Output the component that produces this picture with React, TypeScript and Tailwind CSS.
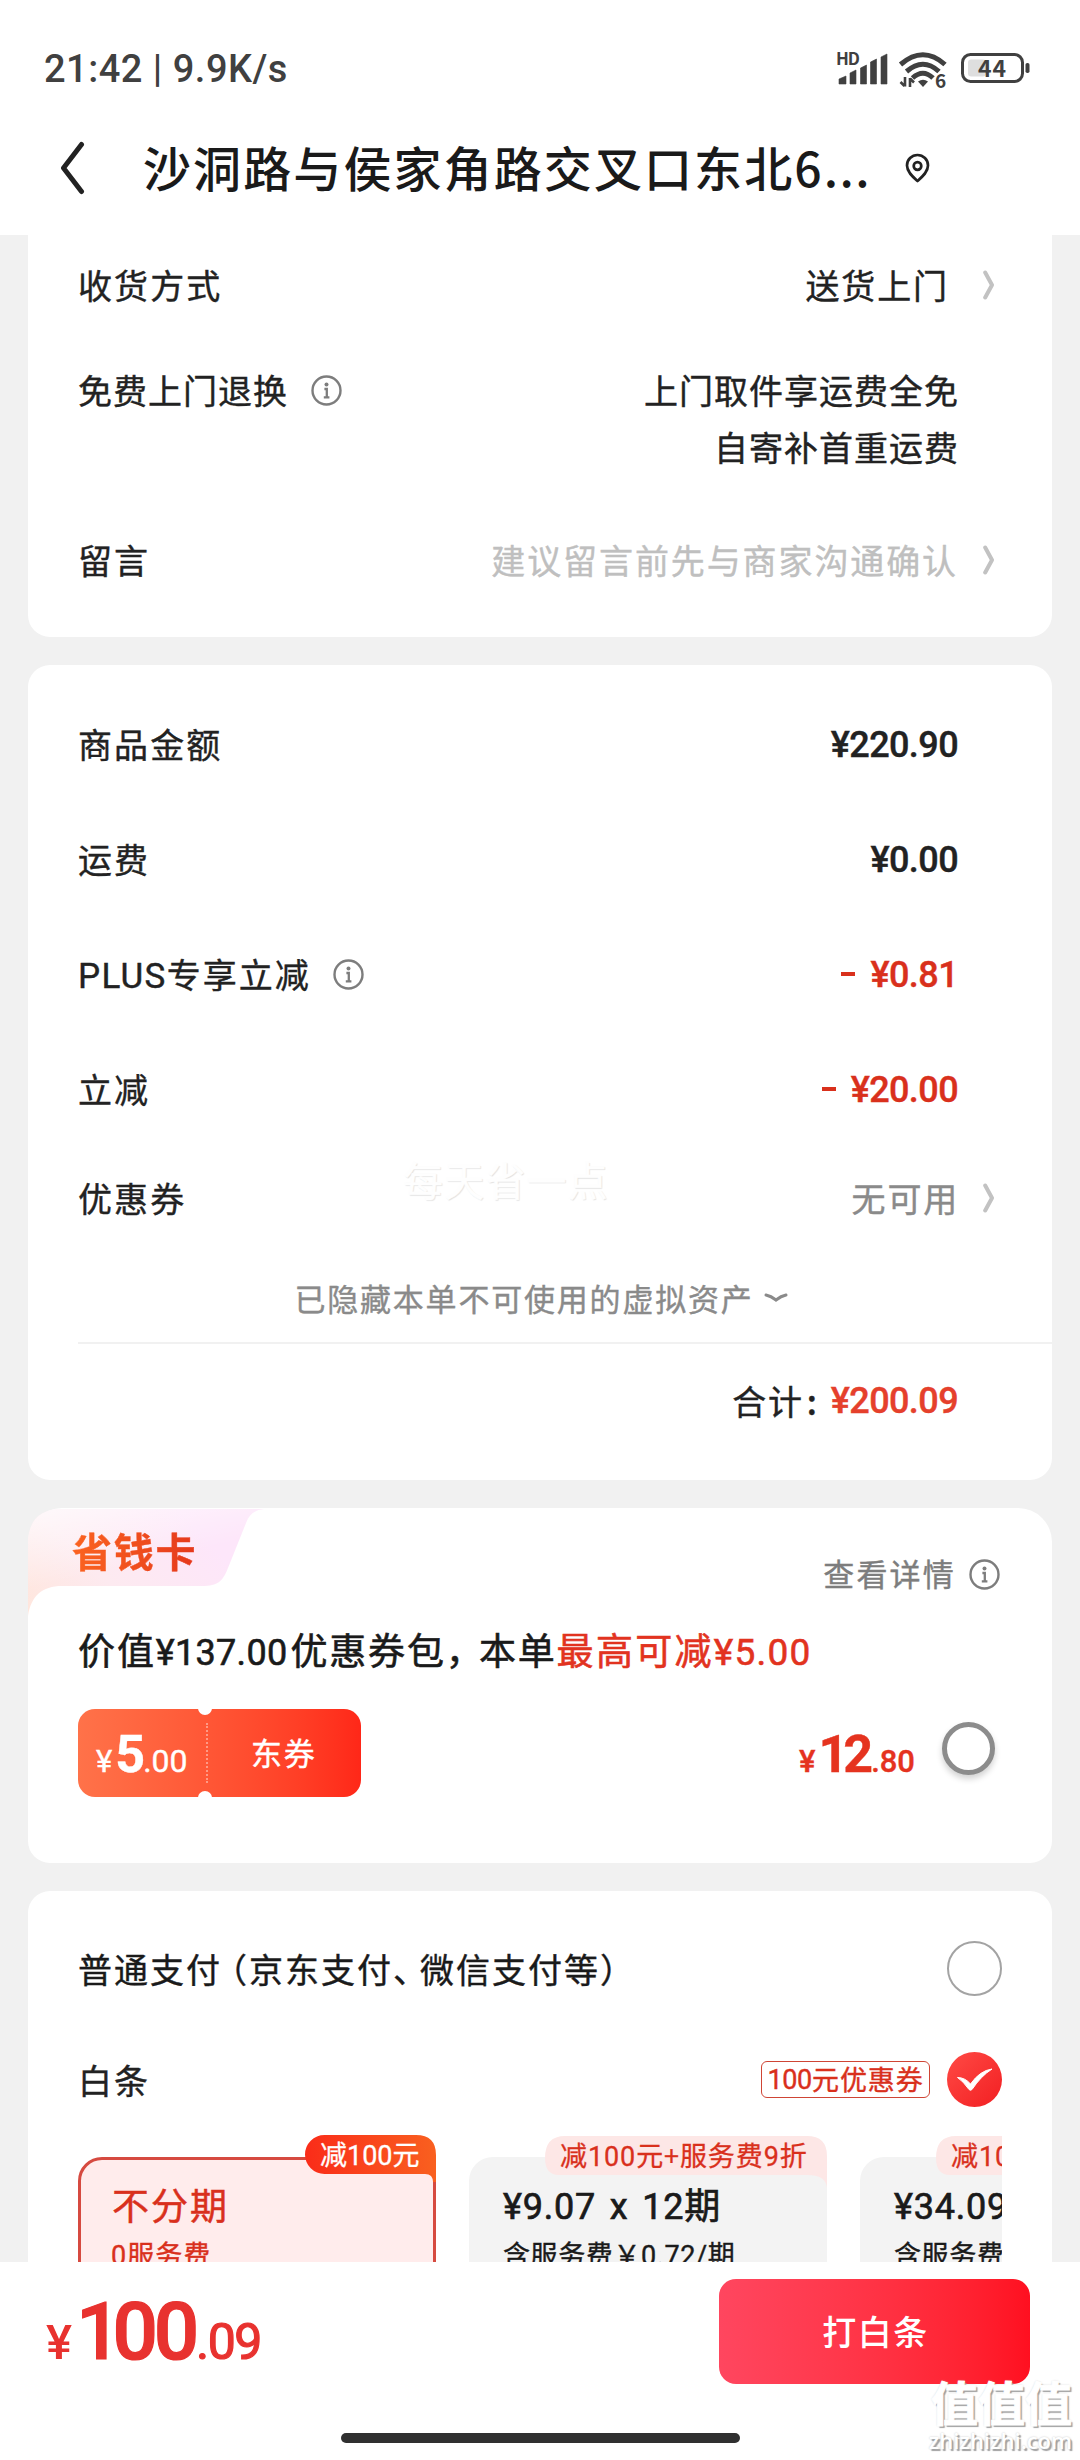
import type { ReactNode } from "react";

function InfoIcon({ className = "" }: { className?: string }) {
  return (
    <svg className={"h-[31px] w-[31px] shrink-0 " + className} viewBox="0 0 31 31" fill="none" stroke="#7d7d7d">
      <circle cx="15.5" cy="15.5" r="14" strokeWidth="2.4" />
      <circle cx="15.5" cy="9.6" r="2" fill="#7d7d7d" stroke="none" />
      <path d="M13.400 14h2.400v8.300M12.8 22.400h5.600" strokeWidth="2.300" />
    </svg>
  );
}

function ChevronRight() {
  return (
    <svg className="ml-[25px] mt-[2px] h-[30px] w-[11px] shrink-0" viewBox="0 0 11 30" fill="none">
      <path d="M2.2 2.5L9 15L2.2 27.5" stroke="#c2c2c2" strokeWidth="4" strokeLinecap="round" strokeLinejoin="round" />
    </svg>
  );
}

function Latin({ children, className = "" }: { children: ReactNode; className?: string }) {
  return <span className={"font-['Roboto','Noto_Sans_CJK_SC',sans-serif] leading-none " + className}>{children}</span>;
}

function StatusBar() {
  return (
    <div className="flex h-[134px] items-center justify-between pl-[44px] pr-[50px]">
      <div className="mt-[5px] font-['Roboto',sans-serif] text-[38px] font-medium tracking-[0.5px] text-[#404040]">21:42 | 9.9K/s</div>
      <svg className="mt-[3px] h-[40px] w-[194px] overflow-visible" viewBox="0 0 194 40" fill="#404040">
        <text x="0" y="15.500" fontSize="17" fontWeight="700" textLength="24">HD</text>
        <path d="M3 35V30l7-3v8zM14 35V24l6-3v14zM24.5 35V19l6-3v19zM34.500 35V13l6-3v25zM45 35V8l6-3v30z" stroke="#404040" strokeWidth="0.6" strokeLinejoin="round" />
        <g fill="none" stroke="#404040" strokeWidth="5">
          <path d="M64.500 15.500Q87 -4 109 15.500" />
          <path d="M70.500 22.500Q87 8 103 22.500" />
          <path d="M76.500 29Q87 19.500 97 29" />
        </g>
        <path d="M82 32.500q5-3.500 10 0L87 38z" />
        <path d="M69 28v9.500M64.500 33l4 4M74 38v-9M74 29.500l4 4" stroke="#404040" strokeWidth="2.6" fill="none" />
        <text x="99" y="38.500" fontSize="19" fontWeight="700">6</text>
        <rect x="126.500" y="5.500" width="60" height="27" rx="8" fill="none" stroke="#404040" strokeWidth="3" />
        <rect x="132" y="10.500" width="18" height="17" rx="3" fill="#dedede" />
        <rect x="189.500" y="14" width="4" height="10" rx="1.800" />
        <text x="142" y="27.500" fontSize="23" fontWeight="700" textLength="28">44</text>
      </svg>
    </div>
  );
}

function Header() {
  return (
    <header className="h-[235px] bg-white">
      <StatusBar />
      <div className="flex h-[64px] items-center pl-[59px]">
        <svg className="mt-[3px] h-[54px] w-[26px] shrink-0" viewBox="0 0 26 54" fill="none">
          <path d="M22.500 3.500L4.500 27L22.500 50.500" stroke="#222" strokeWidth="5" strokeLinecap="round" strokeLinejoin="round" />
        </svg>
        <h1 className="ml-[58px] w-[728px] whitespace-nowrap text-[48px] font-medium leading-[64px] tracking-[2.1px] text-[#1a1a1a]">
          沙洞路与侯家角路交叉口东北6<span className="tracking-[1.500px]">...</span>
        </h1>
        <svg className="ml-[34px] mt-[4px] h-[30px] w-[25px] shrink-0" viewBox="0 0 25 30" fill="none" stroke="#222" strokeWidth="2.700">
          <path d="M12.500 28C8 24 2 19 2 12.500a10.500 10.500 0 0 1 21 0C23 19 17 24 12.500 28z" strokeLinejoin="round" />
          <circle cx="12.500" cy="13" r="3.800" />
        </svg>
      </div>
    </header>
  );
}

type RowProps = { label: ReactNode; value: ReactNode; className: string; info?: boolean; arrow?: boolean; labelClass?: string };

function Row({ label, value, className, info, arrow, labelClass = "tracking-[2.1px]" }: RowProps) {
  return (
    <div className={"flex items-center whitespace-nowrap pl-[50px] text-[34px] text-[#222] " + className + (arrow ? " pr-[58px]" : " pr-[94px]")}>
      <span className={labelClass}>{label}</span>
      {info && <InfoIcon className="ml-[22px] mt-[2px]" />}
      <span className="ml-auto">{value}</span>
      {arrow && <ChevronRight />}
    </div>
  );
}

function DeliveryCard() {
  return (
    <section className="h-[402px] rounded-b-[22px] bg-white">
      <Row label="收货方式" arrow className="h-[98px]" value={<span className="mr-[9px] tracking-[1.9px]">送货上门</span>} />
      <div className="mt-[28px] flex items-start pl-[50px] pr-[93px] text-[34px] leading-[57px] tracking-[1px] text-[#222]">
        <span>免费上门退换</span>
        <InfoIcon className="ml-[23px] mt-[14px]" />
        <p className="ml-auto text-right">
          上门取件享运费全免
          <br />
          自寄补首重运费
        </p>
      </div>
      <Row
        label="留言"
        arrow
        className="mt-[56px] h-[56px]"
        value={<span className="tracking-[1.9px] text-[#bfbfbf]">建议留言前先与商家沟通确认</span>}
      />
    </section>
  );
}

function Price({ children, className = "text-[#222]" }: { children: ReactNode; className?: string }) {
  return <Latin className={"block pt-[2px] text-[36px] font-medium tracking-[-0.6px] " + className}>{children}</Latin>;
}

function Minus() {
  return <span className="mb-[11px] mr-[15px] inline-block h-[3.500px] w-[14px] bg-[#d9301c]" />;
}

function AmountCard() {
  return (
    <section className="relative mt-[28px] h-[815px] rounded-[22px] bg-white pt-[21px]">
      <Row label="商品金额" className="h-[115px]" value={<Price>¥220.90</Price>} />
      <Row label="运费" className="h-[115px]" value={<Price>¥0.00</Price>} />
      <Row
        label={<><Latin className="text-[35px] tracking-[1.300px]">PLUS</Latin>专享立减</>}
        info
        labelClass="tracking-[2px]"
        className="h-[115px]"
        value={<Price className="text-[#d9301c]"><Minus />¥0.81</Price>}
      />
      <Row label="立减" className="h-[115px]" value={<Price className="text-[#d9301c]"><Minus />¥20.00</Price>} />
      <Row
        label="优惠券"
        arrow
        className="h-[102px]"
        value={<span className="-mr-[1px] tracking-[1.8px] text-[#8a8a8a]">无可用</span>}
      />
      <div className="mt-[26px] flex h-[48px] items-center justify-center pl-[2px] text-[31px] tracking-[1.800px] text-[#8a8a8a]">
        已隐藏本单不可使用的虚拟资产
        <svg className="ml-[10px] h-[10px] w-[24px]" viewBox="0 0 24 10" fill="none">
          <path d="M2 2Q7 3 12 7Q17 3 22 2" stroke="#8a8a8a" strokeWidth="3" strokeLinecap="round" />
        </svg>
      </div>
      <div className="ml-[50px] mt-[20px] h-[2px] bg-[#f1f1f1]" />
      <div className="flex h-[112px] items-center justify-end pr-[94px]">
        <span className="mr-[12px] whitespace-nowrap text-[34px] tracking-[1.8px] text-[#222]">
          合计<span className="ml-[3px] font-medium">:</span>
        </span>
        <Price className="text-[#e5402c]">¥200.09</Price>
      </div>
      <div className="absolute left-[375px] top-[484px] whitespace-nowrap text-[40px] leading-[60px] tracking-[1.2px] text-[#fefefe] [text-shadow:1px_1px_1px_#e2e2e2]">
        每天省一点
      </div>
    </section>
  );
}

function SavingsCard() {
  return (
    <section className="relative mt-[28px] h-[355px] rounded-b-[22px] rounded-t-[34px] bg-white">
      <svg className="absolute left-0 top-0 h-[110px] w-[240px]" viewBox="0 0 240 110">
        <defs>
          <linearGradient id="tab" x1="0" y1="1" x2="0.9" y2="0.6">
            <stop offset="0" stopColor="#ffe6dc" />
            <stop offset="0.450" stopColor="#fdeaf0" />
            <stop offset="1" stopColor="#fde6fa" />
          </linearGradient>
          <linearGradient id="tabFade" x1="0" y1="0" x2="0.300" y2="0.600">
            <stop offset="0" stopColor="#fff" stopOpacity="0.7" />
            <stop offset="1" stopColor="#fff" stopOpacity="0" />
          </linearGradient>
        </defs>
        <path d="M0 36Q0 1 34 1H236C226 2 221 7 218 15L200 60C195 73 190 78 174 78H34C14 78 3 88 0 108Z" fill="url(#tab)" />
        <path d="M0 36Q0 1 34 1H236C226 2 221 7 218 15L200 60C195 73 190 78 174 78H34C14 78 3 88 0 108Z" fill="url(#tabFade)" />
      </svg>
      <div className="relative flex items-start justify-between pl-[44px] pr-[52px]">
        <h2 className="mt-[12px] bg-linear-to-r from-[#fb6320] to-[#e5371c] bg-clip-text text-[40px] font-bold leading-[60px] tracking-[1.7px] text-transparent">
          省钱卡
        </h2>
        <div className="mt-[42px] flex h-[46px] items-center text-[31px] tracking-[2.2px] text-[#7d7d7d]">
          查看详情
          <InfoIcon className="ml-[13px] mt-[3px]" />
        </div>
      </div>
      <p className="mt-[23px] h-[60px] whitespace-nowrap pl-[50px] text-[37px] leading-[60px] text-[#1a1a1a] [-webkit-text-stroke:0.600px_currentColor]">
        <span className="tracking-[1.9px]">价值</span>
        <Latin className="text-[36px] tracking-[0.3px]">¥137.00</Latin>
        <span className="ml-[3px] tracking-[1.8px]">优惠券包<span className="mr-[13px] [font-feature-settings:'halt']">，</span>本单</span>
        <span className="tracking-[2.3px] text-[#e2331f]">最高可减</span>
        <Latin className="text-[37px] tracking-[1.200px] text-[#e2331f]">¥5.00</Latin>
      </p>
      <div className="mt-[30px] flex items-start justify-between pl-[50px] pr-[57px]">
        <div className="relative flex h-[88px] w-[283px] overflow-hidden rounded-[17px] bg-linear-to-r from-[#ff7249] to-[#ff2718] text-white">
          <div className="flex h-[88px] w-[128px] items-baseline pl-[18px] pt-[8px] font-['Roboto',sans-serif] leading-[76px]">
            <span className="text-[31px]">¥</span>
            <span className="ml-[3px] text-[52px] font-bold tracking-[-3px]">5</span>
            <span className="ml-px text-[32px]">.00</span>
          </div>
          <div className="my-[14px] border-l-2 border-dotted border-white/40" />
          <div className="flex-1 pl-[43px] text-[31px] leading-[86px] tracking-[1.7px] [-webkit-text-stroke:0.400px_currentColor]">东券</div>
          <i className="absolute left-[120px] top-[-8px] h-[14px] w-[14px] rounded-full bg-white" />
          <i className="absolute bottom-[-8px] left-[120px] h-[14px] w-[14px] rounded-full bg-white" />
        </div>
        <div className="flex items-start">
          <div className="flex items-baseline pt-[8px] font-['Roboto',sans-serif] leading-[76px] text-[#e5331f]">
            <span className="text-[31px] font-medium">¥</span>
            <span className="ml-[3px] text-[52px] font-bold tracking-[-5px]">12</span>
            <span className="ml-[3px] text-[31px] font-medium">.80</span>
          </div>
          <div className="ml-[27px] mt-[13px] h-[53px] w-[53px] rounded-full border-[5px] border-[#8c8c8c] bg-white shadow-[0_4px_6px_rgba(0,0,0,0.18)]" />
        </div>
      </div>
    </section>
  );
}

function PinkBadge({ children }: { children: ReactNode }) {
  return (
    <div className="absolute left-[76px] top-[-21px] h-[52px] w-[282px]">
      <svg className="absolute inset-0 h-[52px] w-[282px]" viewBox="0 0 282 52" fill="#fde7e6">
        <path d="M20 0H262Q282 0 282 20V52Q281 39 262 39H14Q0 39 0 22Q0 0 20 0Z" />
      </svg>
      <div className="relative h-[38px] whitespace-nowrap pl-[15px] text-[27px] leading-[38px] tracking-[0.9px] text-[#d9301c] [-webkit-text-stroke:0.300px_currentColor]">
        {children}
      </div>
    </div>
  );
}

const discountLabel = (
  <>
    减<Latin>100</Latin>元+服务费<Latin>9</Latin>折
  </>
);

function InstallmentOption({ title, fee }: { title: ReactNode; fee: ReactNode }) {
  return (
    <div className="relative h-[140px] w-[358px] shrink-0 rounded-[24px] bg-[#f3f3f3] pl-[34px] pt-[20px] text-[#1a1a1a]">
      <PinkBadge>{discountLabel}</PinkBadge>
      <div className="h-[52px] whitespace-nowrap text-[36px] leading-[52px] [-webkit-text-stroke:0.700px_currentColor]">{title}</div>
      <div className="mt-[6px] h-[38px] whitespace-nowrap text-[27px] leading-[38px] tracking-[0.6px]">{fee}</div>
    </div>
  );
}

function PaymentCard() {
  return (
    <section className="mt-[28px] h-[400px] rounded-t-[22px] bg-white pl-[50px] pr-[50px] pt-[48px]">
      <div className="flex h-[58px] items-center justify-between text-[34px] text-[#1a1a1a]">
        <span className="whitespace-nowrap tracking-[2px]">
          普通支付<span className="ml-[8px] [font-feature-settings:'halt']">（</span>京东支付
          <span className="mr-[8px] [font-feature-settings:'halt']">、</span>微信支付等
          <span className="[font-feature-settings:'halt']">）</span>
        </span>
        <span className="h-[55px] w-[55px] rounded-full border-2 border-[#a3a3a3]" />
      </div>
      <div className="mt-[53px] flex h-[58px] items-center text-[34px] text-[#222]">
        <span className="tracking-[2.1px]">白条</span>
        <span className="ml-auto flex h-[37px] w-[169px] items-center justify-center whitespace-nowrap rounded-[6px] border-[1.5px] border-[#cf4535] text-[27px] tracking-[0.9px] text-[#d9301c]">
          <Latin className="mt-[2px] tracking-[-0.3px]">100</Latin>
          <span className="-mt-[2px] leading-none">元优惠券</span>
        </span>
        <svg className="ml-[17px] h-[55px] w-[55px]" viewBox="0 0 55 55">
          <defs>
            <linearGradient id="tick" x1="0" y1="0" x2="1" y2="1">
              <stop offset="0" stopColor="#ff4a45" />
              <stop offset="1" stopColor="#f21f22" />
            </linearGradient>
          </defs>
          <circle cx="27.500" cy="27.500" r="27.500" fill="url(#tick)" />
          <path d="M10.500 25.500Q18 25.500 23.500 32Q33 18.500 45 17Q34 24 25 37.500Q23.500 39 22 37.500Q16 29 10.500 25.500Z" fill="#fff" stroke="#fff" strokeWidth="1" strokeLinejoin="round" />
        </svg>
      </div>
      <div className="mt-[24px] flex gap-[33px] overflow-hidden pt-[25px]">
        <div className="relative h-[140px] w-[358px] shrink-0 rounded-[24px] border-[3px] border-[#d64a40] bg-[#ffecec] pl-[31px] pt-[18px] text-[#d9301c]">
          <div className="absolute right-[-3px] top-[-25px] h-[48px] w-[131px]">
            <svg className="absolute inset-0 h-[48px] w-[131px]" viewBox="0 0 131 48">
              <defs>
                <linearGradient id="hot" x1="0" y1="0" x2="1" y2="0">
                  <stop offset="0" stopColor="#fa2c19" />
                  <stop offset="1" stopColor="#f9601f" />
                </linearGradient>
              </defs>
              <path d="M19.500 0H111Q131 0 131 20V47H128Q128 39 120 39H19.500A19.500 19.500 0 0 1 19.500 0Z" fill="url(#hot)" />
            </svg>
            <div className="relative h-[37px] whitespace-nowrap pl-[15px] text-[27px] leading-[37px] text-white [-webkit-text-stroke:0.300px_currentColor]">
              减<Latin>100</Latin>元
            </div>
          </div>
          <div className="h-[52px] text-[37px] leading-[52px] tracking-[2px] [-webkit-text-stroke:0.500px_currentColor]">不分期</div>
          <div className="-ml-px mt-[5px] h-[38px] text-[27px] leading-[38px] tracking-[1px]">
            <Latin>0</Latin>服务费
          </div>
        </div>
        <InstallmentOption
          title={<><Latin className="tracking-[0.8px] [word-spacing:4px]">¥9.07 x 12</Latin>期</>}
          fee={<>含服务费￥<Latin>0.72/</Latin>期</>}
        />
        <InstallmentOption
          title={<><Latin className="tracking-[0.800px] [word-spacing:4px]">¥34.09 x 3</Latin>期</>}
          fee={<>含服务费￥<Latin>0.76/</Latin>期</>}
        />
      </div>
    </section>
  );
}

function Footer() {
  return (
    <footer className="relative h-[198px] bg-white">
      <div className="flex h-[122px] items-start justify-between pl-[46px] pr-[50px] pt-[17px]">
        <div className="flex items-baseline font-['Roboto',sans-serif] leading-[106px] text-[#e8322f]">
          <span className="text-[49px] font-medium">¥</span>
          <span className="ml-[4px] text-[80px] font-medium [-webkit-text-stroke:1.200px_currentColor]">
            <span className="tracking-[-9px]">1</span>
            <span className="tracking-[-4.200px]">00</span>
          </span>
          <span className="ml-px text-[50px] tracking-[-1.500px] [-webkit-text-stroke:1.200px_currentColor]">.09</span>
        </div>
        <button className="h-[105px] w-[311px] rounded-[17px] bg-linear-to-r from-[#ff465f] to-[#ff0f20] pb-[2px] pl-[2px] text-[34px] font-medium tracking-[1.500px] text-white">
          打白条
        </button>
      </div>
      <div className="mx-auto mt-[49px] h-[10px] w-[399px] rounded-full bg-[#303030]" />
      <div className="absolute right-[8px] top-[112px] whitespace-nowrap text-right font-bold text-white [text-shadow:2px_2px_1px_#a0a0a0,0_0_2px_#c4c4c4]">
        <div className="text-[47px] leading-[54px] [-webkit-text-stroke:1px_#fff]">值值值</div>
        <div className="font-['Open_Sans'] text-[22px] font-semibold leading-[24px]">zhizhizhi.com</div>
      </div>
    </footer>
  );
}

export default function App() {
  return (
    <div className="h-[2460px] w-[1080px] overflow-hidden bg-[#f1f1f1] font-['Noto_Sans_CJK_SC',sans-serif]">
      <div className="h-[2262px] overflow-hidden">
        <Header />
        <main className="mx-[28px] [-webkit-text-stroke:0.400px_currentColor]">
          <DeliveryCard />
          <AmountCard />
          <SavingsCard />
          <PaymentCard />
        </main>
      </div>
      <Footer />
    </div>
  );
}
